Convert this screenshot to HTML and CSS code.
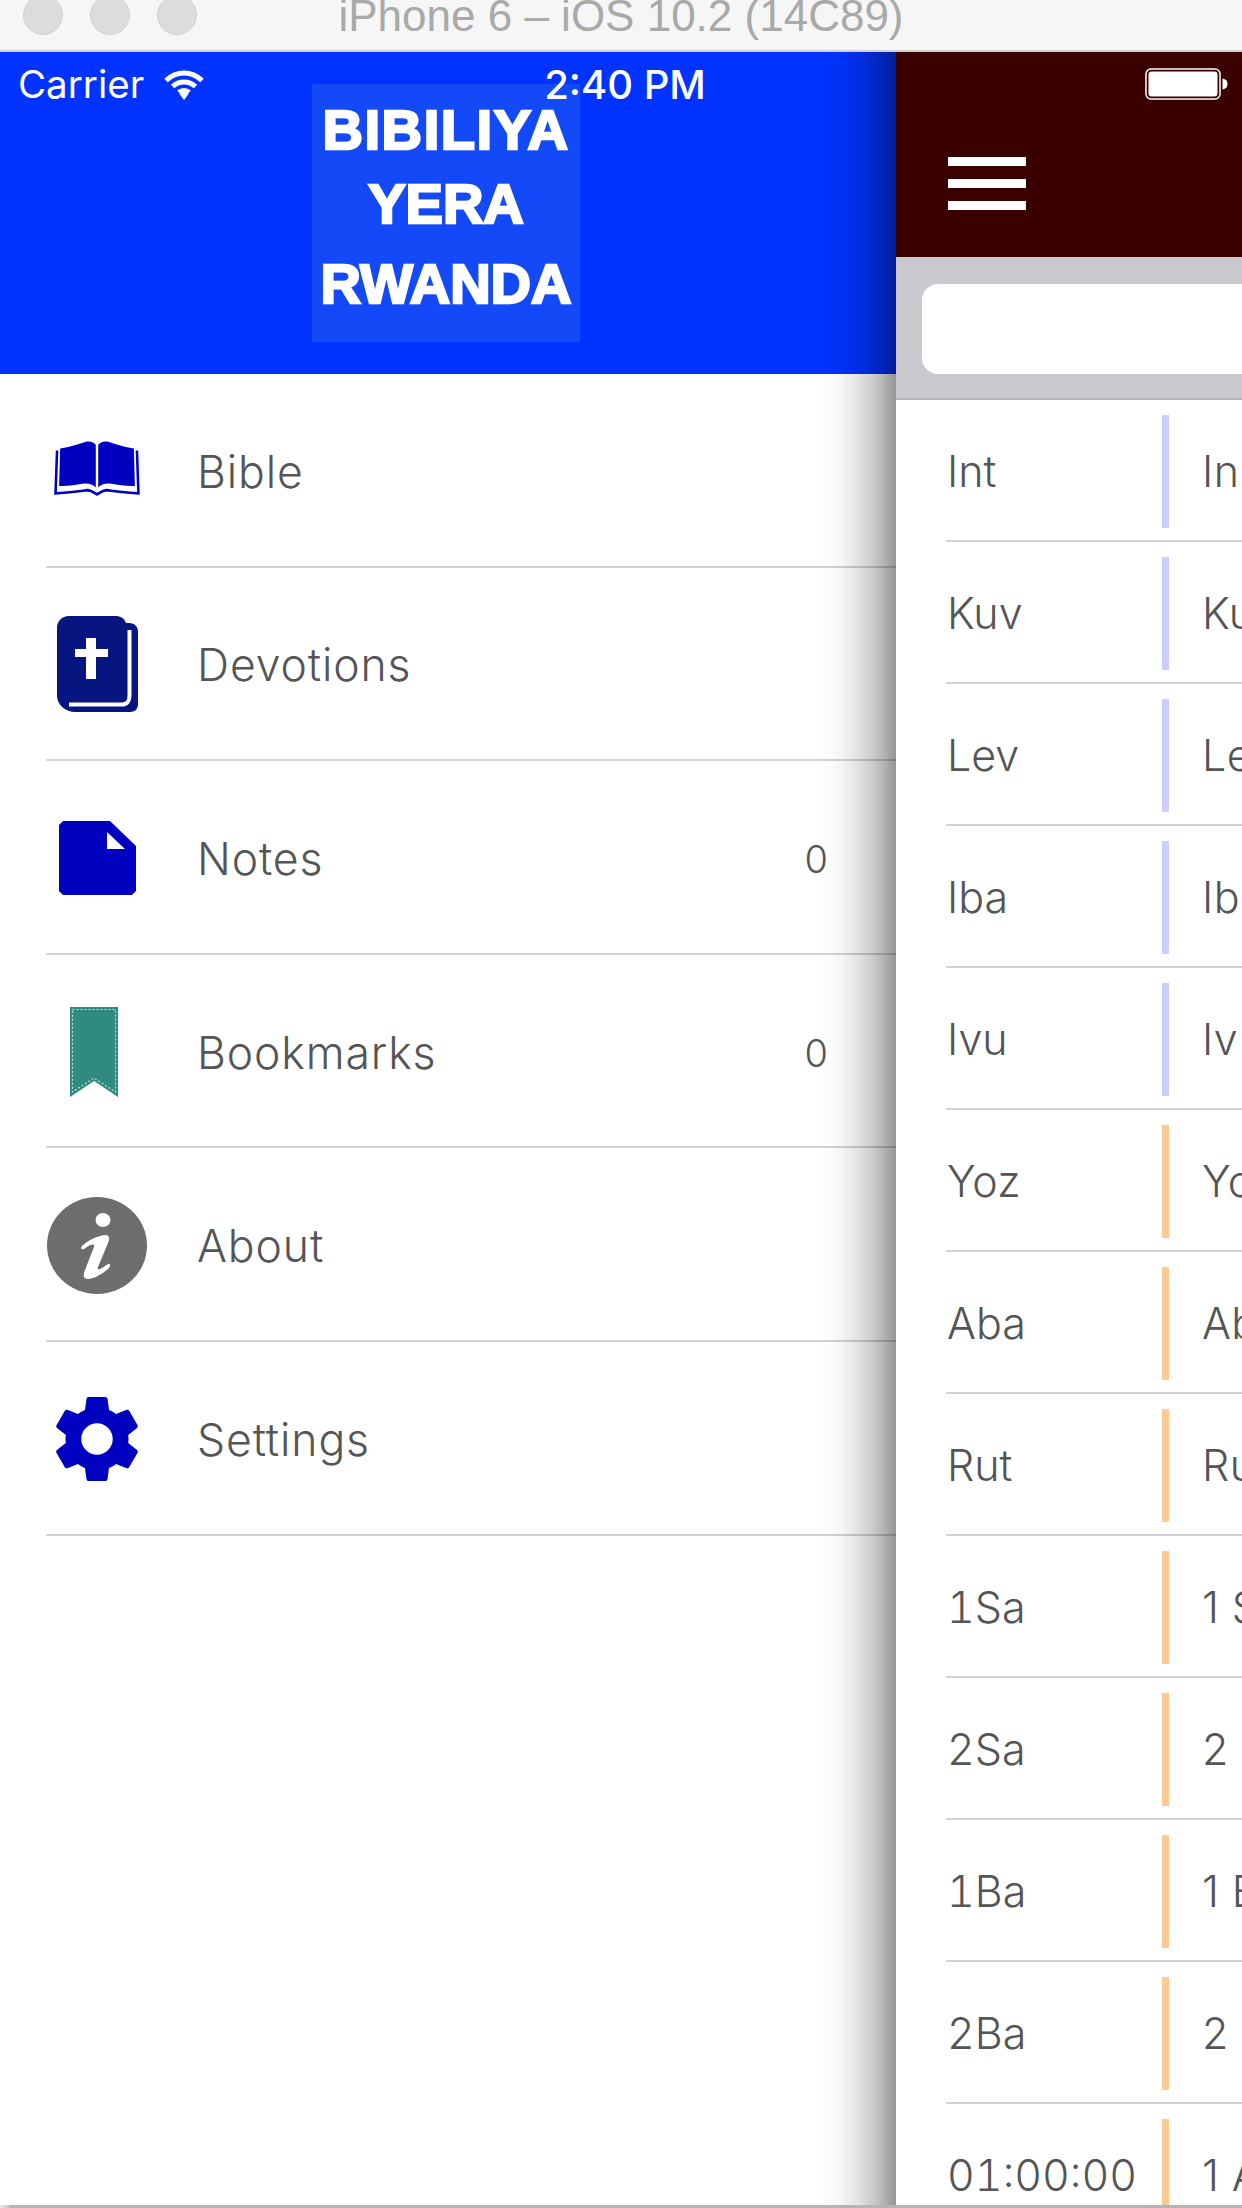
FILE: index.html
```html
<!DOCTYPE html>
<html lang="en">
<head>
<meta charset="utf-8">
<title>Bibiliya Yera Rwanda</title>
<link rel="stylesheet" href="styles.css">
</head>
<body>
<div class="titlebar">
  <div class="lights"><span class="light"></span><span class="light"></span><span class="light"></span></div>
  <div class="title">iPhone 6 – iOS 10.2 (14C89)</div>
</div>
<div class="screen">
  <div class="statusbar">
    <div class="status-left"><span>Carrier</span>
      <svg class="wifi" viewBox="0 0 40 31"><path d="M2 11.500C12.500 1.500 27.500 1.500 38 11.500" /><path d="M8.500 17.500C15 11.500 25 11.500 31.500 17.500" /><path d="M14.500 23C17.500 20.300 22.500 20.300 25.500 23" class="thin"/><path d="M15.500 25L20 20.500L24.500 25L20 31Z" class="solid"/></svg>
    </div>
    <div class="status-time">2:40 PM</div>
    <div class="status-right"><svg class="battery" viewBox="0 0 83 32"><rect x="1" y="1" width="74" height="30" rx="5" class="batt-line"/><rect x="3.500" y="3.500" width="69" height="25" rx="3" class="solid"/><path d="M77.500 10.500C81 11 82.500 13 82.500 16C82.500 19 81 21 77.500 21.500Z" class="solid"/></svg></div>
  </div>
  <aside class="drawer">
    <header class="drawer-head">
      <div class="logo"><span class="l1">BIBILIYA</span><span class="l2">YERA</span><span class="l3">RWANDA</span></div>
    </header>
    <nav class="menu">
      <div class="item">
        <span class="slot"><svg class="ic-book" viewBox="0 0 84 52" preserveAspectRatio="none"><path class="blue" d="M6 7C15 6 24 3 32 0.500C36 0 38 1 40.800 3.500L40.800 44C38 41 33 39.500 28 40.500C21 41.500 12 43 5 42.500Z"/><path class="blue" d="M78 7C69 6 60 3 52 0.500C48 0 46 1 43.200 3.500L43.200 44C46 41 51 39.500 56 40.500C63 41.500 72 43 79 42.500Z"/><path class="book-cover" d="M3 9L1.500 49.500C12 49 24 47.500 33 46.500C37 47 39 49 42 50.500C45 49 47 47 51 46.500C60 47.500 72 49 82.500 49.500L81 9"/></svg></span>
        <span class="label">Bible</span>
      </div>
      <div class="item">
        <span class="slot"><svg class="ic-devo" viewBox="0 0 81 96"><path class="navy" d="M12 0H58C64 0 67 2 69 7H72C78 7 81 11 81 16V88C81 93 78 96 73 96H18C9 96 0 89 0 80V12C0 5 5 0 12 0Z"/><path class="devo-line" d="M72.500 14V80C72.500 85 70 88.500 65 88.500H12"/><path class="white" d="M29 22H39V33H51V41H39V63H29V41H18V33H29Z"/></svg></span>
        <span class="label">Devotions</span>
      </div>
      <div class="item">
        <span class="slot"><svg class="ic-note" viewBox="0 0 77 74"><path class="blue" d="M4 0H51L77 25V70L73 74H4L0 70V4Z"/><path class="white" d="M48 11L66 28H48Z"/></svg></span>
        <span class="label">Notes</span><span class="count">0</span>
      </div>
      <div class="item">
        <span class="slot"><svg class="ic-mark" viewBox="0 0 48 90"><path class="teal" d="M0 0H48V90L24 74L0 90Z"/><path class="stitch" d="M2.500 2.500H45.500V85L24 71L2.500 85Z"/></svg></span>
        <span class="label">Bookmarks</span><span class="count">0</span>
      </div>
      <div class="item">
        <span class="slot"><svg class="ic-info" viewBox="0 0 100 97"><ellipse class="gray" cx="50" cy="48.500" rx="50" ry="48.500"/><ellipse class="white" cx="56" cy="23" rx="7.500" ry="7"/><path class="white" d="M35 49C40 44 50 39 58 38C63 38 63 42 61 46L51 70C50 73 52 73 55 71L61 67C63 66 64 68 62 71C56 77 46 82 41 82C36 82 36 78 38 73L47 50C48 47 46 47 43 48L37 52C35 53 33 51 35 49Z"/></svg></span>
        <span class="label">About</span>
      </div>
      <div class="item">
        <span class="slot"><svg class="ic-gear" viewBox="2.400 2 19.200 20"><path class="blue" fill-rule="evenodd" d="M19.140 12.940c.04-.3.06-.61.06-.94 0-.32-.02-.64-.07-.94l2.030-1.580c.18-.14.23-.41.12-.61l-1.920-3.320c-.12-.22-.37-.29-.59-.22l-2.390.96c-.5-.38-1.030-.7-1.620-.94l-.36-2.540c-.04-.24-.24-.41-.48-.41h-3.840c-.24 0-.43.17-.47.41l-.36 2.540c-.59.24-1.130.57-1.620.94l-2.390-.96c-.22-.08-.47 0-.59.22L2.740 8.870c-.12.21-.08.47.12.61l2.030 1.580c-.05.3-.09.63-.09.94s.02.64.07.94l-2.030 1.580c-.18.14-.23.41-.12.61l1.920 3.320c.12.22.37.29.59.22l2.390-.96c.5.38 1.030.7 1.620.94l.36 2.540c.05.24.24.41.48.41h3.840c.24 0 .44-.17.47-.41l.36-2.540c.59-.24 1.130-.56 1.620-.94l2.390.96c.22.08.47 0 .59-.22l1.920-3.320c.12-.22.07-.47-.12-.61l-2.010-1.580zM12 15.600c-1.980 0-3.600-1.620-3.600-3.600s1.620-3.600 3.600-3.600 3.600 1.620 3.600 3.600-1.620 3.600-3.600 3.600z"/></svg></span>
        <span class="label">Settings</span>
      </div>
    </nav>
  </aside>
  <main class="panel">
    <div class="navbar">
      <div class="burger"><span></span><span></span><span></span></div>
    </div>
    <div class="searchband"><div class="searchbox"></div></div>
    <div class="list">
      <div class="row"><span class="abbr">Int</span><span class="bar law"></span><span class="name">In</span></div>
      <div class="row"><span class="abbr">Kuv</span><span class="bar law"></span><span class="name">Ku</span></div>
      <div class="row"><span class="abbr">Lev</span><span class="bar law"></span><span class="name">Le</span></div>
      <div class="row"><span class="abbr">Iba</span><span class="bar law"></span><span class="name">Ib</span></div>
      <div class="row"><span class="abbr">Ivu</span><span class="bar law"></span><span class="name">Iv</span></div>
      <div class="row"><span class="abbr">Yoz</span><span class="bar hist"></span><span class="name">Yo</span></div>
      <div class="row"><span class="abbr">Aba</span><span class="bar hist"></span><span class="name">Ab</span></div>
      <div class="row"><span class="abbr">Rut</span><span class="bar hist"></span><span class="name">Ru</span></div>
      <div class="row"><span class="abbr">1Sa</span><span class="bar hist"></span><span class="name">1 S</span></div>
      <div class="row"><span class="abbr">2Sa</span><span class="bar hist"></span><span class="name">2</span></div>
      <div class="row"><span class="abbr">1Ba</span><span class="bar hist"></span><span class="name">1 B</span></div>
      <div class="row"><span class="abbr">2Ba</span><span class="bar hist"></span><span class="name">2</span></div>
      <div class="row"><span class="abbr">01:00:00</span><span class="bar hist"></span><span class="name">1 A</span></div>
    </div>
  </main>
</div>
<div class="bottomline"></div>
</body>
</html>
```

FILE: styles.css
```css
* { box-sizing: border-box; }
html, body { margin: 0; padding: 0; }
body {
  width: 1242px;
  height: 2208px;
  overflow: hidden;
  display: flex;
  flex-direction: column;
  background: #fff;
  font-family: Inter, "Noto Sans", sans-serif;
  color: #555;
}

/* simulator window chrome */
.titlebar {
  flex: 0 0 52px;
  display: grid;
  grid-template-columns: 1fr auto 1fr;
  background: #f6f6f6;
  border-bottom: 2px solid #cfcfcf;
  overflow: hidden;
}
.lights { display: flex; gap: 27px; padding-left: 23px; margin-top: -5px; }
.light {
  width: 40px;
  height: 40px;
  border-radius: 50%;
  background: #dcdcdc;
  border: 1px solid #d0d0d0;
}
.title {
  font-family: "Liberation Sans", Arial, sans-serif;
  font-size: 44px;
  line-height: 50px;
  margin-top: -9px;
  color: #a9a9a9;
  white-space: nowrap;
}

.screen {
  flex: 1 1 auto;
  min-height: 0;
  position: relative;
  display: flex;
  overflow: hidden;
}

/* status bar lies over both panes */
.statusbar {
  position: absolute;
  z-index: 3;
  top: 0;
  left: 0;
  width: 1242px;
  height: 64px;
  padding: 0 14px 0 18px;
  display: grid;
  grid-template-columns: 1fr auto 1fr;
  align-items: center;
  color: #fff;
  font-size: 38.500px;
}
.status-left { display: flex; align-items: center; gap: 20px; }
.status-time { font-weight: 500; font-size: 40px; padding-left: 4px; }
.status-right { display: flex; justify-content: flex-end; }
.wifi { width: 40px; height: 31px; fill: none; stroke: #fff; stroke-width: 5; }
.wifi .thin { stroke-width: 4; }
.wifi .solid { fill: #fff; stroke: none; }
.battery { width: 83px; height: 32px; }
.battery .solid { fill: #fff; }
.batt-line { fill: none; stroke: #fff; stroke-width: 1.500; }

/* drawer */
.drawer { flex: 0 0 896px; display: flex; flex-direction: column; }
.drawer-head {
  flex: 0 0 322px;
  background: #0033ff;
  padding: 32px 0 0 312px;
}
.logo {
  width: 268px;
  height: 258px;
  background: #1449f7;
  color: #fff;
  font-family: "Liberation Sans", Arial, sans-serif;
  font-weight: 700;
  font-size: 56px;
  line-height: 77px;
  padding-top: 7px;
  text-align: center;
  white-space: nowrap;
  -webkit-text-stroke: 2.500px #fff;
}
.logo span { display: block; }
.logo .l1 { letter-spacing: 1.600px; }
.logo .l2 { margin-top: -3px; }
.logo .l3 { margin-top: 3px; }
.menu { display: flex; flex-direction: column; padding-left: 46px; }
.item {
  height: 193.600px;
  display: flex;
  align-items: center;
  border-bottom: 2px solid #d2d2d2;
}
.slot { flex: 0 0 102px; display: flex; justify-content: center; margin-right: 49px; padding-top: 2px; }
.slot svg { display: block; }
.label { flex: 1 1 auto; font-size: 44.500px; font-weight: 350; letter-spacing: .9px; padding-top: 4px; }
.count { flex: 0 0 88px; font-size: 38px; font-weight: 350; padding: 4px 68px 0 0; }
.ic-book { width: 86px; height: 55px; margin-top: -5px; }
.ic-devo { width: 81px; height: 96px; }
.ic-note { width: 77px; height: 74px; }
.ic-mark { width: 48px; height: 90px; margin-left: -6px; }
.ic-info { width: 100px; height: 97px; }
.ic-gear { width: 84px; height: 88px; }
.blue { fill: #0000c0; }
.navy { fill: #06157f; }
.teal { fill: #2e8b7d; }
.gray { fill: #6d6d6d; }
.white { fill: #fff; }
.book-cover { fill: none; stroke: #0000c0; stroke-width: 2.500; }
.devo-line { fill: none; stroke: #fff; stroke-width: 4; }
.stitch { fill: none; stroke: #bfe3dc; stroke-width: 1.200; stroke-dasharray: 2 2; }

/* main panel */
.panel {
  position: relative;
  flex: 0 0 1242px;
  display: flex;
  flex-direction: column;
  background: #fff;
}
.panel::before {
  content: "";
  position: absolute;
  top: 0;
  bottom: 0;
  right: 100%;
  width: 76px;
  background: linear-gradient(to right,
    rgba(0,0,0,0) 0%,
    rgba(0,0,0,.03) 25%,
    rgba(0,0,0,.11) 50%,
    rgba(0,0,0,.23) 75%,
    rgba(0,0,0,.42) 100%);
}
.navbar { flex: 0 0 205px; background: #3a0000; padding: 105px 0 0 52px; }
.burger { display: flex; flex-direction: column; gap: 13px; width: 78px; }
.burger span { display: block; height: 9px; background: #fff; }
.searchband {
  flex: 0 0 142.500px;
  background: #c9c9ce;
  border-bottom: 2px solid #b4b4b8;
  padding: 27px 0 0 26px;
}
.searchbox { height: 90px; background: #fff; border-radius: 16px; }
.list { display: flex; flex-direction: column; padding-left: 50px; }
.row {
  flex: 0 0 142px;
  display: flex;
  align-items: center;
  border-bottom: 2px solid #d2d2d6;
  font-size: 43px;
  font-weight: 350;
  letter-spacing: .4px;
  white-space: nowrap;
}
.abbr { flex: 0 0 216px; padding: 2px 0 0 1px; font-feature-settings: "tnum"; letter-spacing: 0; }
.bar { flex: 0 0 7px; align-self: stretch; margin: 15px 0 12px; }
.bar.law { background: #ccccff; }
.bar.hist { background: #ffc993; }
.name { margin-left: 33px; padding-top: 2px; }

.bottomline {
  flex: 0 0 3px;
  background: linear-gradient(to right, #eee 0, #b4b4b4 12px);
}
```
